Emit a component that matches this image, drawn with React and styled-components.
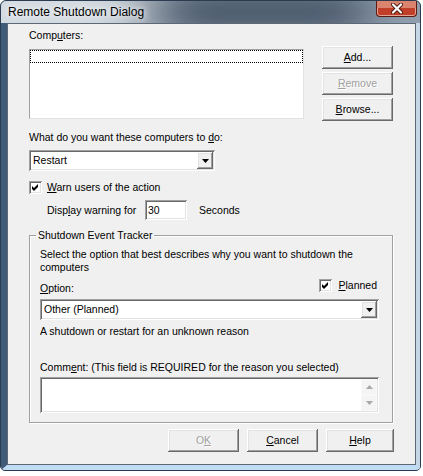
import styled, { createGlobalStyle, css } from 'styled-components';

const GlobalStyle = createGlobalStyle`
  html, body {
    margin: 0;
    padding: 0;
    background: #fff;
  }
  body {
    font-family: "Liberation Sans", Arial, sans-serif;
    font-size: 10.5px;
    color: #000;
  }
`;

const raised = css`
  box-shadow:
    inset -1px -1px #696969,
    inset 1px 1px #fff,
    inset -2px -2px #a0a0a0,
    inset 2px 2px #e3e3e3;
`;

const sunken = css`
  box-shadow:
    inset 1px 1px #a0a0a0,
    inset -1px -1px #fff,
    inset 2px 2px #696969,
    inset -2px -2px #e3e3e3;
`;

const Window = styled.div`
  width: 421px;
  height: 471px;
  box-sizing: border-box;
  border: 1px solid #2c3c50;
  border-radius: 6px 6px 5px 5px;
  display: flex;
  flex-direction: column;
  overflow: hidden;
  background: #4d6b8a;
`;

const TitleBar = styled.div`
  height: 22px;
  flex-shrink: 0;
  padding-left: 7px;
  display: flex;
  justify-content: space-between;
  align-items: flex-start;
  background: #1c2c42;
  box-shadow:
    inset 175px 0 60px -25px #d3dae1,
    inset -75px 0 50px -20px #7d8d9f;
`;

const Title = styled.div`
  font-size: 12px;
  line-height: 22px;
  color: #000;
  text-shadow: 0 0 6px #fff, 0 0 10px rgba(255, 255, 255, 0.9);
`;

const CloseButton = styled.div`
  width: 41px;
  height: 17px;
  margin: -1px 3px 0 0;
  box-sizing: border-box;
  border: 1px solid #5a1c12;
  border-top: none;
  border-radius: 0 0 4px 4px;
  background: #c13f28;
  box-shadow: inset 0 8px 0 #da8470, inset 0 0 0 1px #e6a494;
  display: flex;
  align-items: center;
  justify-content: center;
`;

const Frame = styled.div`
  flex: 1;
  display: flex;
  border-style: solid;
  border-width: 0 4px 5px 6px;
  border-color: #9fb8ce #c6d6e4 #bfdcf4 #3f5b7a;
  background: #4d6b8a;
`;

const Client = styled.div`
  flex: 1;
  box-sizing: border-box;
  border: 1px solid #5c6876;
  background: #f0f0f0;
  padding: 5px 21px 0;
  display: flex;
  flex-direction: column;
`;

const Key = styled.span`
  text-decoration: underline;
  text-underline-offset: 1px;
  text-decoration-thickness: 1px;
`;

const Label = styled.div`
  line-height: 13px;
  white-space: nowrap;
  padding-top: ${p => p.$pad || 0}px;
  margin-top: ${p => p.$mt || 0}px;
`;

const TopSection = styled.div`
  display: flex;
  gap: 18px;
  align-items: flex-start;
`;

const LeftCol = styled.div`
  width: 275px;
  display: flex;
  flex-direction: column;
`;

const ListBox = styled.div`
  margin-top: 7px;
  height: 70px;
  box-sizing: border-box;
  background: #fff;
  border: 1px solid;
  border-color: #a0a0a0 #e3e3e3 #e3e3e3 #a0a0a0;
`;

const FocusRow = styled.div`
  height: 13px;
  box-sizing: border-box;
  border: 1px dotted #000;
`;

const ButtonCol = styled.div`
  margin-top: 17px;
  display: flex;
  flex-direction: column;
  gap: 3px;
`;

const Button = styled.div`
  width: ${p => p.$w || 71}px;
  height: 23px;
  box-sizing: border-box;
  background: #f0f0f0;
  ${raised};
  display: flex;
  align-items: center;
  justify-content: center;
  line-height: 13px;
  color: ${p => (p.$disabled ? '#a0a0a0' : '#000')};
  text-shadow: ${p => (p.$disabled ? '1px 1px #fff' : 'none')};
`;

const Combo = styled.div`
  width: ${p => (p.$w ? `${p.$w}px` : '100%')};
  height: 21px;
  margin-top: ${p => p.$mt || 0}px;
  box-sizing: border-box;
  padding: 2px;
  background: #fff;
  ${sunken};
  display: flex;
`;

const ComboText = styled.div`
  flex: 1;
  padding-left: 2px;
  line-height: 17px;
`;

const DropButton = styled.div`
  width: 16px;
  height: 17px;
  box-sizing: border-box;
  background: #f0f0f0;
  ${raised};
  display: flex;
  align-items: center;
  justify-content: center;
`;

const CheckRow = styled.div`
  display: flex;
  align-items: center;
  margin-top: ${p => p.$mt || 0}px;
  margin-right: ${p => p.$mr || 0}px;
  line-height: 13px;
`;

const CheckBox = styled.div`
  width: 13px;
  height: 13px;
  box-sizing: border-box;
  background: #fff;
  ${sunken};
  margin-right: ${p => p.$gap || 5}px;
  flex-shrink: 0;
`;

const WarnRow = styled.div`
  margin-top: 6px;
  height: 20px;
  padding-left: 18px;
  display: flex;
  align-items: center;
  line-height: 13px;
`;

const WarnLabel = styled.div`
  width: 98px;
`;

const NumberField = styled.div`
  width: 42px;
  height: 20px;
  box-sizing: border-box;
  background: #fff;
  ${sunken};
  padding-left: 3px;
  line-height: 20px;
`;

const Unit = styled.div`
  margin-left: 12px;
`;

const GroupBox = styled.fieldset`
  margin: 9px 0 0;
  width: 364px;
  box-sizing: border-box;
  padding: 6px 13px 9px 10px;
  border: 1px solid #a0a0a0;
  box-shadow: inset 1px 1px #fff, 1px 1px #fff;
  min-width: 0;
`;

const Legend = styled.legend`
  padding: 0 2px;
  margin-left: -4px;
  line-height: 13px;
  background: #f0f0f0;
`;

const Desc = styled.div`
  width: 325px;
  line-height: 13px;
`;

const OptionRow = styled.div`
  margin-top: 5px;
  display: flex;
  justify-content: space-between;
  align-items: flex-start;
`;

const CommentBox = styled.div`
  margin-top: 3px;
  height: 36px;
  box-sizing: border-box;
  padding: 2px;
  background: #fff;
  ${sunken};
  display: flex;
  justify-content: flex-end;
`;

const ScrollBar = styled.div`
  width: 16px;
  display: flex;
  flex-direction: column;
  background: #f4f4f4;
`;

const ScrollArrow = styled.div`
  flex: 1;
  display: flex;
  align-items: center;
  justify-content: center;
  box-shadow: inset 0 0 0 1px #f8f8f8;
`;

const ButtonRow = styled.div`
  margin-top: 6px;
  display: flex;
  justify-content: flex-end;
  gap: 8px;
`;

const Arrow = ({ up, color = '#000' }) => (
  <svg width="7" height="4" viewBox="0 0 7 4">
    <polygon points={up ? '0,4 7,4 3.5,0' : '0,0 7,0 3.5,4'} fill={color} />
  </svg>
);

const Check = () => (
  <svg width="13" height="13" viewBox="0 0 13 13">
    <path d="M3 5 L5 7 L9 3 L9 6 L5 10 L3 8 Z" fill="#000" />
  </svg>
);

const CloseGlyph = () => (
  <svg width="12" height="11" viewBox="0 0 12 11">
    <path d="M2 1.5 L10 9.5 M10 1.5 L2 9.5" stroke="#4a1a10" strokeWidth="4" strokeLinecap="round" />
    <path d="M2 1.5 L10 9.5 M10 1.5 L2 9.5" stroke="#fff" strokeWidth="2.2" strokeLinecap="round" />
  </svg>
);

export default function App() {
  return (
    <>
      <GlobalStyle />
      <Window>
        <TitleBar>
          <Title>Remote Shutdown Dialog</Title>
          <CloseButton>
            <CloseGlyph />
          </CloseButton>
        </TitleBar>
        <Frame>
          <Client>
            <TopSection>
              <LeftCol>
                <Label>
                  Comp<Key>u</Key>ters:
                </Label>
                <ListBox>
                  <FocusRow />
                </ListBox>
              </LeftCol>
              <ButtonCol>
                <Button>
                  <Key>A</Key>dd...
                </Button>
                <Button $disabled>
                  <Key>R</Key>emove
                </Button>
                <Button>
                  <Key>B</Key>rowse...
                </Button>
              </ButtonCol>
            </TopSection>

            <Label $mt={10}>
              What do you want these computers to <Key>d</Key>o:
            </Label>
            <Combo $w={186} $mt={6}>
              <ComboText>Restart</ComboText>
              <DropButton>
                <Arrow />
              </DropButton>
            </Combo>

            <CheckRow $mt={10}>
              <CheckBox>
                <Check />
              </CheckBox>
              <span>
                <Key>W</Key>arn users of the action
              </span>
            </CheckRow>
            <WarnRow>
              <WarnLabel>
                Disp<Key>l</Key>ay warning for
              </WarnLabel>
              <NumberField>30</NumberField>
              <Unit>Seconds</Unit>
            </WarnRow>

            <GroupBox>
              <Legend>Shutdown Event Tracker</Legend>
              <Desc>Select the option that best describes why you want to shutdown the computers</Desc>
              <OptionRow>
                <Label $pad={3}>
                  <Key>O</Key>ption:
                </Label>
                <CheckRow $mr={2}>
                  <CheckBox $gap={6}>
                    <Check />
                  </CheckBox>
                  <span>
                    <Key>P</Key>lanned
                  </span>
                </CheckRow>
              </OptionRow>
              <Combo $mt={4}>
                <ComboText>Other (Planned)</ComboText>
                <DropButton>
                  <Arrow />
                </DropButton>
              </Combo>
              <Label $mt={5}>A shutdown or restart for an unknown reason</Label>
              <Label $mt={23}>
                Comm<Key>e</Key>nt: (This field is REQUIRED for the reason you selected)
              </Label>
              <CommentBox>
                <ScrollBar>
                  <ScrollArrow>
                    <Arrow up color="#a8a8a8" />
                  </ScrollArrow>
                  <ScrollArrow>
                    <Arrow color="#a8a8a8" />
                  </ScrollArrow>
                </ScrollBar>
              </CommentBox>
            </GroupBox>

            <ButtonRow>
              <Button $disabled>
                O<Key>K</Key>
              </Button>
              <Button>
                <Key>C</Key>ancel
              </Button>
              <Button $w={68}>
                <Key>H</Key>elp
              </Button>
            </ButtonRow>
          </Client>
        </Frame>
      </Window>
    </>
  );
}
